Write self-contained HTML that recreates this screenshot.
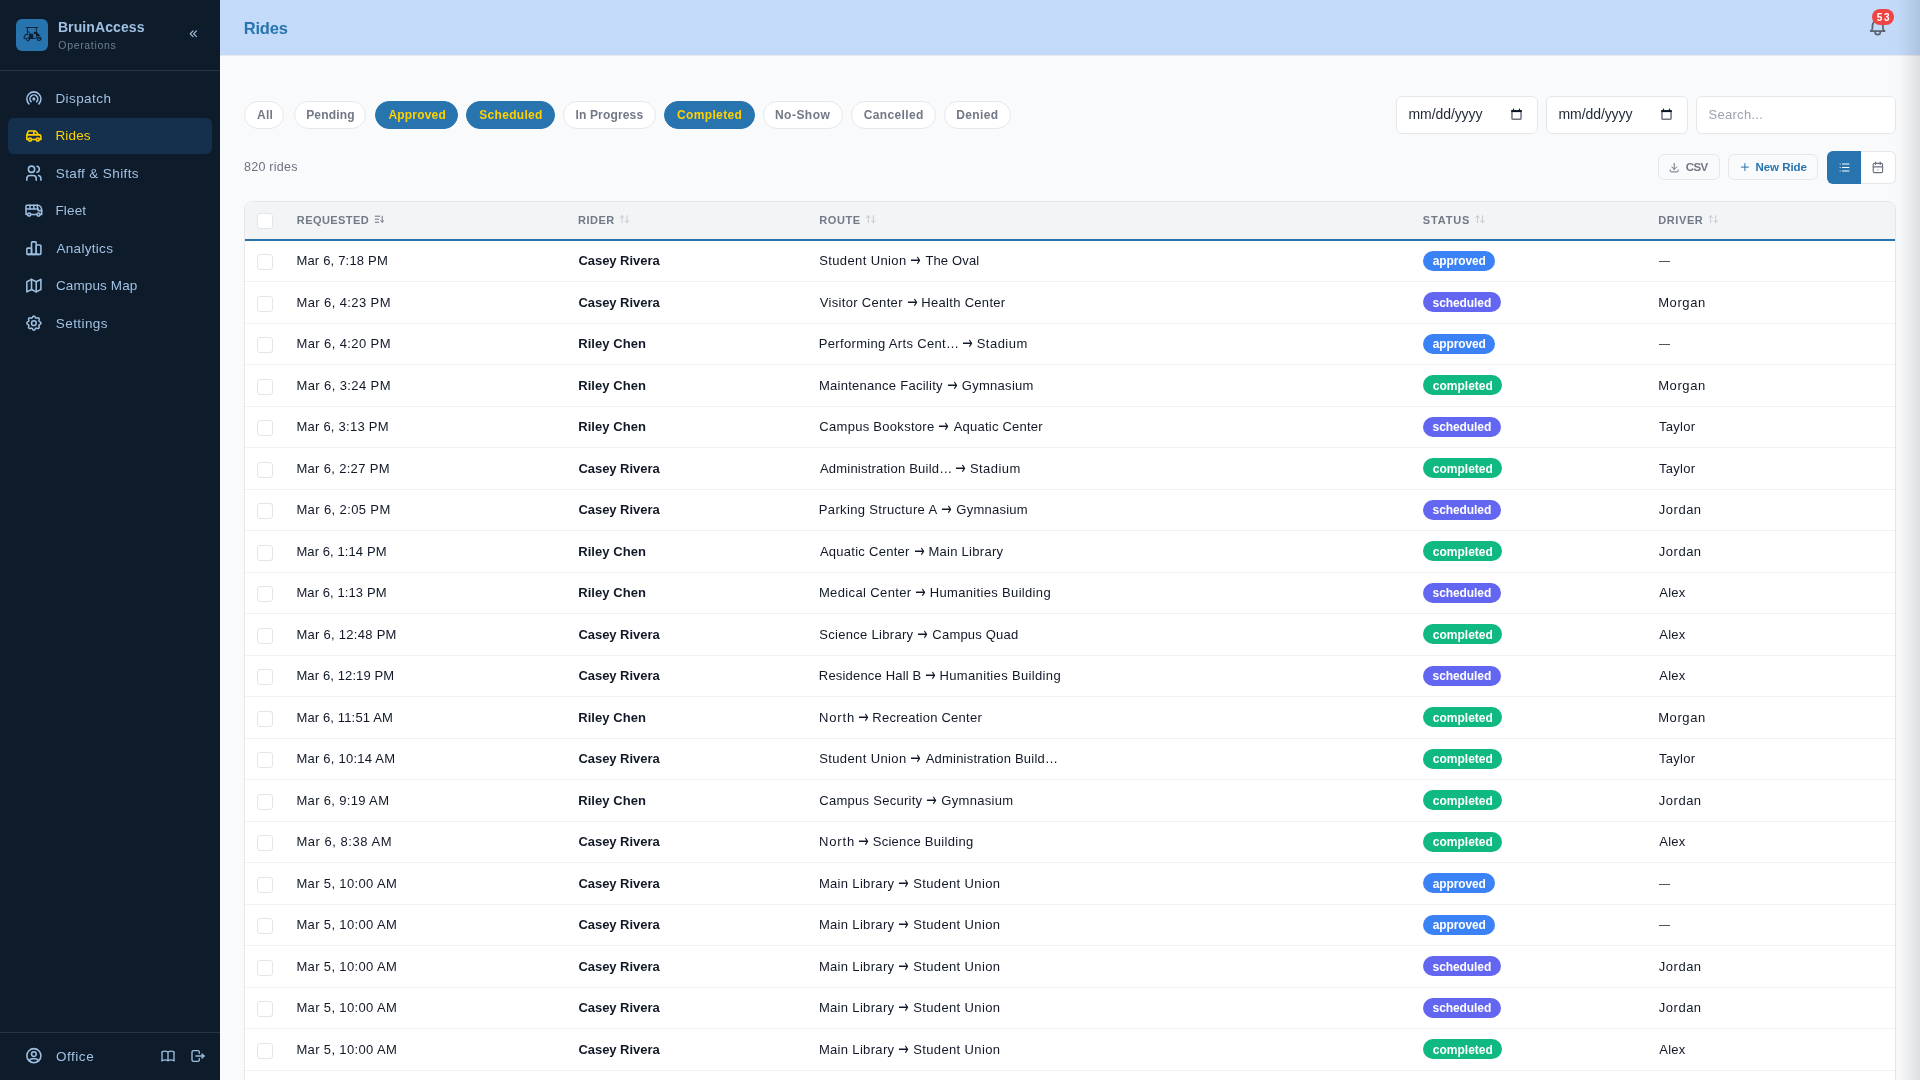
<!DOCTYPE html>
<html lang="en">
<head>
<meta charset="utf-8">
<title>BruinAccess Operations - Rides</title>
<style>
*{box-sizing:border-box;margin:0;padding:0}
html,body{width:1920px;height:1080px;overflow:hidden}
body{font-family:"Liberation Sans",Arial,sans-serif;background:#f9fafb;color:#1f2937;position:relative}
#app{position:absolute;left:0;top:0;width:1920px;height:1080px;will-change:transform}
svg{display:block}
.ic{position:absolute;fill:none;stroke:currentColor;stroke-width:2;stroke-linecap:round;stroke-linejoin:round}
.t{position:absolute;line-height:20px;white-space:pre}
/* sidebar */
#side{position:absolute;left:0;top:0;width:220px;height:1080px;background:#0e1b2b}
#brand{position:absolute;left:0;top:0;width:220px;height:71px;border-bottom:1px solid #2a3546}
#logo{position:absolute;left:16px;top:19px;width:32px;height:32px;border-radius:6px;background:#2774ae;color:#0e1b2b}
#logo svg{position:absolute;left:0;top:0}
.bn{color:#a0c1e2}
.bs{color:#6f7f93}
.nav{position:absolute;left:8px;width:204px;height:36px;border-radius:6px}
.nav.on{background:#15304d}
.nv{color:#9cbfe0}
.nvt{color:#a0c1e2}
.nv.on,.nvt.on{color:#ffd100}
#foot{position:absolute;left:0;top:1032px;width:220px;height:48px;border-top:1px solid #2a3546}
/* header */
#head{position:absolute;left:220px;top:0;width:1700px;height:56px;background:#c3dbf9;border-bottom:1px solid #e7e9ec}
.h1{color:#2774ae}
.bell{color:#5b6472}
#badge{position:absolute;left:1872px;top:9px;width:22px;height:16px;border-radius:8px;background:#ef4444}
.bdg{color:#fff}
/* filters */
.pill{position:absolute;top:101px;height:28px;border:1px solid #e5e7eb;border-radius:14px;background:#fff}
.pill.on{background:#2774ae;border-color:#2774ae}
.pt{color:#717886}
.pt.on{color:#ffd100}
.inp{position:absolute;top:96px;height:37.5px;border:1px solid #e5e7eb;border-radius:6px;background:#fff}
.it{color:#1f2937}
.ph{color:#9ca3af}
.cal{position:absolute;color:#1f2937}
.cnt{color:#6b7280}
.btn{position:absolute;top:154px;height:26px;border:1px solid #e5e7eb;border-radius:6px;background:#f9fafb}
.bt{color:#717886}
.bl{color:#2774ae}
.g5{color:#6b7280}
.g3{color:#c5c9d0}
.wh{color:#fff}
#tog{position:absolute;left:1861px;top:151px;width:34.5px;height:33px;border:1px solid #e5e7eb;border-left:0;border-radius:0 6px 6px 0;background:#fff}
#toga{position:absolute;left:1827px;top:151px;width:34px;height:33px;border-radius:6px 0 0 6px;background:#2774ae}
/* table */
#tbl{position:absolute;left:244px;top:201px;width:1652px;height:900px;border:1px solid #e5e7eb;border-radius:8px 8px 0 0;background:#fff;overflow:hidden}
#th{position:absolute;left:0;top:0;width:1650px;height:39px;background:#f3f4f6;border-bottom:2px solid #2774ae}
.th{color:#727987}
.cb{position:absolute;left:257px;width:16px;height:16px;border:1px solid #e2e5e9;border-radius:3px;background:#fff}
.row{position:absolute;left:245px;width:1650px;height:41.5px;border-bottom:1px solid #f0f1f3}
.c{color:#111827}
.ar{color:#111827;font-family:"DejaVu Sans","Liberation Sans",sans-serif;font-size:13px;line-height:20px;transform:scale(.96,1.4);transform-origin:50% 10.5px}
.bd{position:absolute;left:1423px;height:20px;border-radius:10px}
.bdt{color:#fff}
.ap{background:#3b82f6}
.sc{background:#6366f1}
.co{background:#10b981}
#shade{position:absolute;left:1893px;top:0;width:27px;height:1080px;background:linear-gradient(to right,rgba(0,0,0,0),rgba(0,0,0,.012) 25%,rgba(0,0,0,.035) 45%,rgba(0,0,0,.075) 75%,rgba(0,0,0,.105))}
</style>
</head>
<body>
<div id="app">
<div id="side">
<div id="brand"></div>
<div id="logo"><svg width="32" height="32" viewBox="0 0 32 32" fill="none" stroke="currentColor" stroke-width=".9" stroke-linecap="round" stroke-linejoin="round"><path d="M10.2 8.5h11.6"/><path d="M11.4 8.5v7"/><path d="M20.3 8.8l.3 9.6"/><path d="M12.2 12.3l2.3 3"/><path d="M13.6 15.2h3.2v4.2h-3.2z" fill="currentColor"/><path d="M13.6 19.4h6"/><path d="M11.4 15.5h-2.3v1.9h-1v2.2h2"/><circle cx="11.9" cy="20.4" r="1.5"/><path d="M21.3 20.9v-2.6h3.6v2.6"/><circle cx="23" cy="20.3" r="1.4"/><circle cx="18.8" cy="13.8" r=".7" fill="currentColor"/><path d="M18.8 13.8l1.6 1.6"/><path d="M21 13.7l2.8 3h-3z" fill="currentColor"/></svg></div>
<div class="t bn" style="left:57.91px;top:16.80px;font-size:14px;font-weight:700;letter-spacing:0.093px;">BruinAccess</div>
<div class="t bs" style="left:58.30px;top:34.75px;font-size:10.5px;letter-spacing:0.672px;">Operations</div>
<svg class="ic nv" style="left:186px;top:27px;" width="15" height="15" viewBox="0 0 26.667 26.667"><g transform="translate(1.600 0.000)"><path d="M11 7l-5 5l5 5"/><path d="M17 7l-5 5l5 5"/></g></svg>
<div class="nav" style="top:80.0px"></div><svg class="ic nv" style="left:24px;top:88px;" width="20" height="20" viewBox="0 0 25.600 25.600"><g transform="translate(0.640 0.960)"><path d="M18.364 19.364a9 9 0 1 0 -12.728 0"/><path d="M15.536 16.536a5 5 0 1 0 -7.072 0"/><path d="M12 13m-1 0a1 1 0 1 0 2 0a1 1 0 1 0 -2 0"/></g></svg><div class="t nvt" style="left:55.39px;top:89.00px;font-size:13.5px;letter-spacing:0.429px;">Dispatch</div>
<div class="nav on" style="top:117.5px"></div><svg class="ic nv on" style="left:24px;top:126px;" width="20" height="20" viewBox="0 0 25.600 25.600"><g transform="translate(0.640 0.320)"><path d="M7 17m-2 0a2 2 0 1 0 4 0a2 2 0 1 0 -4 0"/><path d="M17 17m-2 0a2 2 0 1 0 4 0a2 2 0 1 0 -4 0"/><path d="M5 17h-2v-6l2 -5h9l4 5h1a2 2 0 0 1 2 2v4h-2m-4 0h-6m-6 -6h15m-6 0v-5"/></g></svg><div class="t nvt on" style="left:55.39px;top:126.00px;font-size:13.5px;letter-spacing:0.173px;">Rides</div>
<div class="nav" style="top:155.0px"></div><svg class="ic nv" style="left:24px;top:163px;" width="20" height="20" viewBox="0 0 25.600 25.600"><g transform="translate(0.640 0.960)"><path d="M9 7m-4 0a4 4 0 1 0 8 0a4 4 0 1 0 -8 0"/><path d="M3 21v-2a4 4 0 0 1 4 -4h4a4 4 0 0 1 4 4v2"/><path d="M16 3.13a4 4 0 0 1 0 7.75"/><path d="M21 21v-2a4 4 0 0 0 -3 -3.85"/></g></svg><div class="t nvt" style="left:55.77px;top:164.00px;font-size:13.5px;letter-spacing:0.384px;">Staff &amp; Shifts</div>
<div class="nav" style="top:192.5px"></div><svg class="ic nv" style="left:24px;top:201px;" width="20" height="20" viewBox="0 0 25.600 25.600"><g transform="translate(0.640 0.320)"><path d="M6 17m-2 0a2 2 0 1 0 4 0a2 2 0 1 0 -4 0"/><path d="M18 17m-2 0a2 2 0 1 0 4 0a2 2 0 1 0 -4 0"/><path d="M4 17h-2v-11a1 1 0 0 1 1 -1h14a5 7 0 0 1 5 7v5h-2m-4 0h-8"/><path d="M16 5l1.5 7l4.5 0"/><path d="M2 10l15 0"/><path d="M7 5l0 5"/><path d="M12 5l0 5"/></g></svg><div class="t nvt" style="left:55.39px;top:201.00px;font-size:13.5px;letter-spacing:0.182px;">Fleet</div>
<div class="nav" style="top:230.0px"></div><svg class="ic nv" style="left:24px;top:238px;" width="20" height="20" viewBox="0 0 25.600 25.600"><g transform="translate(0.640 0.960)"><path d="M3 13a1 1 0 0 1 1 -1h4a1 1 0 0 1 1 1v6a1 1 0 0 1 -1 1h-4a1 1 0 0 1 -1 -1z"/><path d="M15 9a1 1 0 0 1 1 -1h4a1 1 0 0 1 1 1v10a1 1 0 0 1 -1 1h-4a1 1 0 0 1 -1 -1z"/><path d="M9 5a1 1 0 0 1 1 -1h4a1 1 0 0 1 1 1v14a1 1 0 0 1 -1 1h-4a1 1 0 0 1 -1 -1z"/><path d="M4 20h14"/></g></svg><div class="t nvt" style="left:56.44px;top:239.00px;font-size:13.5px;letter-spacing:0.306px;">Analytics</div>
<div class="nav" style="top:267.5px"></div><svg class="ic nv" style="left:24px;top:276px;" width="20" height="20" viewBox="0 0 25.600 25.600"><g transform="translate(0.640 0.320)"><path d="M3 7l6 -3l6 3l6 -3v13l-6 3l-6 -3l-6 3v-13"/><path d="M9 4v13"/><path d="M15 7v13"/></g></svg><div class="t nvt" style="left:55.93px;top:276.00px;font-size:13.5px;letter-spacing:0.125px;">Campus Map</div>
<div class="nav" style="top:305.0px"></div><svg class="ic nv" style="left:24px;top:313px;" width="20" height="20" viewBox="0 0 25.600 25.600"><g transform="translate(0.640 0.960)"><path d="M10.325 4.317c.426 -1.756 2.924 -1.756 3.35 0a1.724 1.724 0 0 0 2.573 1.066c1.543 -.94 3.31 .826 2.37 2.37a1.724 1.724 0 0 0 1.065 2.572c1.756 .426 1.756 2.924 0 3.35a1.724 1.724 0 0 0 -1.066 2.573c.94 1.543 -.826 3.31 -2.37 2.37a1.724 1.724 0 0 0 -2.572 1.065c-.426 1.756 -2.924 1.756 -3.35 0a1.724 1.724 0 0 0 -2.573 -1.066c-1.543 .94 -3.31 -.826 -2.37 -2.37a1.724 1.724 0 0 0 -1.065 -2.572c-1.756 -.426 -1.756 -2.924 0 -3.35a1.724 1.724 0 0 0 1.066 -2.573c-.94 -1.543 .826 -3.31 2.37 -2.37c1 .608 2.296 .07 2.572 -1.065z"/><path d="M9 12a3 3 0 1 0 6 0a3 3 0 0 0 -6 0"/></g></svg><div class="t nvt" style="left:55.77px;top:314.00px;font-size:13.5px;letter-spacing:0.427px;">Settings</div>
<div id="foot"></div>
<svg class="ic nv" style="left:24px;top:1046px;" width="20" height="20" viewBox="0 0 25.600 25.600"><g transform="translate(0.640 0.384)"><path d="M12 12m-9 0a9 9 0 1 0 18 0a9 9 0 1 0 -18 0"/><path d="M12 10m-3 0a3 3 0 1 0 6 0a3 3 0 1 0 -6 0"/><path d="M6.168 18.849a4 4 0 0 1 3.832 -2.849h4a4 4 0 0 1 3.834 2.855"/></g></svg>
<div class="t nvt" style="left:55.96px;top:1046.60px;font-size:13.5px;letter-spacing:0.537px;">Office</div>
<svg class="ic nv" style="left:160px;top:1048px;" width="17" height="17" viewBox="0 0 25.500 25.500"><path d="M3 19a9 9 0 0 1 9 0a9 9 0 0 1 9 0"/><path d="M3 6a9 9 0 0 1 9 0a9 9 0 0 1 9 0"/><path d="M3 6l0 13"/><path d="M12 6l0 13"/><path d="M21 6l0 13"/></svg>
<svg class="ic nv" style="left:190px;top:1048px;" width="17" height="17" viewBox="0 0 25.500 25.500"><path d="M14 8v-2a2 2 0 0 0 -2 -2h-7a2 2 0 0 0 -2 2v12a2 2 0 0 0 2 2h7a2 2 0 0 0 2 -2v-2"/><path d="M9 12h12l-3 -3"/><path d="M18 15l3 -3"/></svg>
</div>
<div id="head"></div>
<div class="t h1" style="left:243.69px;top:17.90px;font-size:16.5px;font-weight:700;letter-spacing:-0.204px;">Rides</div>
<svg class="ic bell" style="left:1867px;top:16px;" width="22" height="22" viewBox="0 0 25.143 25.143"><g transform="translate(0.229 0.229)"><path d="M10 5a2 2 0 1 1 4 0a7 7 0 0 1 4 6v3a4 4 0 0 0 2 3h-16a4 4 0 0 0 2 -3v-3a7 7 0 0 1 4 -6"/><path d="M9 17v1a3 3 0 0 0 6 0v-1"/></g></svg>
<div id="badge"></div>
<div class="t bdg" style="left:1876.68px;top:8.20px;font-size:10px;font-weight:700;letter-spacing:1.841px;">53</div>
<div class="pill" style="left:244px;width:40px"></div><div class="t pt" style="left:257.01px;top:104.80px;font-size:12px;font-weight:700;letter-spacing:0.309px;">All</div>
<div class="pill" style="left:294px;width:72px"></div><div class="t pt" style="left:306.14px;top:104.80px;font-size:12px;font-weight:700;letter-spacing:0.208px;">Pending</div>
<div class="pill on" style="left:375px;width:83px"></div><div class="t pt on" style="left:388.51px;top:104.80px;font-size:12px;font-weight:700;letter-spacing:0.174px;">Approved</div>
<div class="pill on" style="left:466px;width:89px"></div><div class="t pt on" style="left:479.29px;top:104.80px;font-size:12px;font-weight:700;letter-spacing:0.300px;">Scheduled</div>
<div class="pill" style="left:563px;width:93px"></div><div class="t pt" style="left:575.49px;top:104.80px;font-size:12px;font-weight:700;letter-spacing:0.155px;">In Progress</div>
<div class="pill on" style="left:664px;width:91px"></div><div class="t pt on" style="left:676.97px;top:104.80px;font-size:12px;font-weight:700;letter-spacing:0.364px;">Completed</div>
<div class="pill" style="left:763px;width:80px"></div><div class="t pt" style="left:774.99px;top:104.80px;font-size:12px;font-weight:700;letter-spacing:0.469px;">No-Show</div>
<div class="pill" style="left:851px;width:85px"></div><div class="t pt" style="left:863.72px;top:104.80px;font-size:12px;font-weight:700;letter-spacing:0.372px;">Cancelled</div>
<div class="pill" style="left:944px;width:67px"></div><div class="t pt" style="left:956.24px;top:104.80px;font-size:12px;font-weight:700;letter-spacing:0.377px;">Denied</div>
<div class="inp" style="left:1396px;width:142px"></div><div class="t it" style="left:1408.54px;top:104.00px;font-size:14px;letter-spacing:-0.086px;">mm/dd/yyyy</div><svg style="left:1511px;top:107.8px" class="cal" width="11" height="12.2" viewBox="0 0 11 12.2"><rect x=".95" y="3" width="9.1" height="8.2" rx=".6" fill="none" stroke="#6d7480" stroke-width="1.5"/><path d="M.2 2.1h10.6v2h-10.6z" fill="#0b1424"/><path d="M1.7 2.3l.85-2.2l.85 2.2zM7.6 2.3l.85-2.2l.85 2.2z" fill="#0b1424"/></svg>
<div class="inp" style="left:1546px;width:142px"></div><div class="t it" style="left:1558.54px;top:104.00px;font-size:14px;letter-spacing:-0.086px;">mm/dd/yyyy</div><svg style="left:1661px;top:107.8px" class="cal" width="11" height="12.2" viewBox="0 0 11 12.2"><rect x=".95" y="3" width="9.1" height="8.2" rx=".6" fill="none" stroke="#6d7480" stroke-width="1.5"/><path d="M.2 2.1h10.6v2h-10.6z" fill="#0b1424"/><path d="M1.7 2.3l.85-2.2l.85 2.2zM7.6 2.3l.85-2.2l.85 2.2z" fill="#0b1424"/></svg>
<div class="inp" style="left:1696px;width:200px"></div><div class="t ph" style="left:1708.58px;top:105.00px;font-size:13px;letter-spacing:0.269px;">Search...</div>
<div class="t cnt" style="left:244.05px;top:157.00px;font-size:12.5px;letter-spacing:0.246px;">820 rides</div>
<div class="btn" style="left:1658px;width:62px"></div><svg class="ic g5" style="left:1668px;top:161px;" width="13" height="13" viewBox="0 0 26.000 26.000"><g transform="translate(0.400 0.800)"><path d="M4 17v2a2 2 0 0 0 2 2h12a2 2 0 0 0 2 -2v-2"/><path d="M7 11l5 5l5 -5"/><path d="M12 4l0 12"/></g></svg><div class="t bt" style="left:1685.73px;top:157.25px;font-size:11.5px;font-weight:700;letter-spacing:-0.575px;">CSV</div>
<div class="btn" style="left:1728px;width:90px"></div><svg class="ic bl" style="left:1738px;top:161px;" width="13" height="13" viewBox="0 0 26.000 26.000"><g transform="translate(1.800 0.200)"><path d="M12 5l0 14"/><path d="M5 12l14 0"/></g></svg><div class="t bt bl" style="left:1755.49px;top:157.25px;font-size:11.5px;font-weight:700;letter-spacing:-0.042px;">New Ride</div>
<div id="tog"></div><div id="toga"></div><svg class="ic wh" style="left:1837px;top:160px;" width="15" height="15" viewBox="0 0 25.714 25.714"><g transform="translate(0.343 0.857)"><path d="M9 6l11 0"/><path d="M9 12l11 0"/><path d="M9 18l11 0"/><path d="M5 6l0 .01"/><path d="M5 12l0 .01"/><path d="M5 18l0 .01"/></g></svg><svg class="ic g5" style="left:1870px;top:160px;" width="15" height="15" viewBox="0 0 25.714 25.714"><g transform="translate(1.543 0.686)"><path d="M4 7a2 2 0 0 1 2 -2h12a2 2 0 0 1 2 2v12a2 2 0 0 1 -2 2h-12a2 2 0 0 1 -2 -2z"/><path d="M16 3l0 4"/><path d="M8 3l0 4"/><path d="M4 11l16 0"/><path d="M12 16l0 .01"/></g></svg>
<div id="tbl"><div id="th"></div></div>
<div class="cb" style="top:213px"></div>
<div class="t th" style="left:296.77px;top:210.00px;font-size:11px;font-weight:700;letter-spacing:0.433px;">REQUESTED</div><svg class="ic g5" style="left:373px;top:213px;" width="13" height="13" viewBox="0 0 26.000 26.000"><g transform="translate(0.400 0.400)"><path d="M4 6l9 0"/><path d="M4 12l7 0"/><path d="M4 18l7 0"/><path d="M15 15l3 3l3 -3"/><path d="M18 6l0 12"/></g></svg>
<div class="t th" style="left:577.97px;top:210.00px;font-size:11px;font-weight:700;letter-spacing:0.510px;">RIDER</div><svg class="ic g3" style="left:618px;top:213px;" width="13" height="13" viewBox="0 0 26.000 26.000"><g transform="translate(1.000 0.400)"><path d="M3 9l4 -4l4 4m-4 -4v14"/><path d="M21 15l-4 4l-4 -4m4 4v-14"/></g></svg>
<div class="t th" style="left:819.27px;top:210.00px;font-size:11px;font-weight:700;letter-spacing:0.607px;">ROUTE</div><svg class="ic g3" style="left:864px;top:213px;" width="13" height="13" viewBox="0 0 26.000 26.000"><g transform="translate(1.600 0.400)"><path d="M3 9l4 -4l4 4m-4 -4v14"/><path d="M21 15l-4 4l-4 -4m4 4v-14"/></g></svg>
<div class="t th" style="left:1422.87px;top:210.00px;font-size:11px;font-weight:700;letter-spacing:0.819px;">STATUS</div><svg class="ic g3" style="left:1474px;top:213px;" width="13" height="13" viewBox="0 0 26.000 26.000"><g transform="translate(0.000 0.400)"><path d="M3 9l4 -4l4 4m-4 -4v14"/><path d="M21 15l-4 4l-4 -4m4 4v-14"/></g></svg>
<div class="t th" style="left:1658.27px;top:210.00px;font-size:11px;font-weight:700;letter-spacing:0.594px;">DRIVER</div><svg class="ic g3" style="left:1707px;top:213px;" width="13" height="13" viewBox="0 0 26.000 26.000"><g transform="translate(0.400 0.400)"><path d="M3 9l4 -4l4 4m-4 -4v14"/><path d="M21 15l-4 4l-4 -4m4 4v-14"/></g></svg>
<div class="row" style="top:240.5px"></div><div class="cb" style="top:254px"></div><div class="t c" style="left:296.41px;top:251.00px;font-size:13px;letter-spacing:0.189px;">Mar 6, 7:18 PM</div><div class="t c" style="left:578.42px;top:251.00px;font-size:13px;font-weight:700;letter-spacing:-0.040px;">Casey Rivera</div><div class="t c" style="left:819.18px;top:251.00px;font-size:13px;letter-spacing:0.387px;">Student Union</div><div class="t ar" style="left:910px;top:250.8px">→</div><div class="t c" style="left:925.39px;top:251.00px;font-size:13px;letter-spacing:0.158px;">The Oval</div><div class="bd ap" style="top:251px;width:72px"></div><div class="t bdt" style="left:1432.76px;top:251.00px;font-size:12px;font-weight:700;letter-spacing:-0.126px;">approved</div><div class="t c" style="left:1659.09px;top:250.00px;font-size:11px;">—</div>
<div class="row" style="top:282.0px"></div><div class="cb" style="top:296px"></div><div class="t c" style="left:296.41px;top:293.00px;font-size:13px;letter-spacing:0.401px;">Mar 6, 4:23 PM</div><div class="t c" style="left:578.42px;top:293.00px;font-size:13px;font-weight:700;letter-spacing:-0.040px;">Casey Rivera</div><div class="t c" style="left:819.78px;top:293.00px;font-size:13px;letter-spacing:0.324px;">Visitor Center</div><div class="t ar" style="left:907px;top:292.8px">→</div><div class="t c" style="left:921.32px;top:293.00px;font-size:13px;letter-spacing:0.305px;">Health Center</div><div class="bd sc" style="top:292px;width:78px"></div><div class="t bdt" style="left:1432.57px;top:293.00px;font-size:12px;font-weight:700;letter-spacing:-0.085px;">scheduled</div><div class="t c" style="left:1658.16px;top:293.00px;font-size:13px;letter-spacing:0.603px;">Morgan</div>
<div class="row" style="top:323.5px"></div><div class="cb" style="top:337px"></div><div class="t c" style="left:296.41px;top:334.00px;font-size:13px;letter-spacing:0.401px;">Mar 6, 4:20 PM</div><div class="t c" style="left:578.19px;top:334.00px;font-size:13px;font-weight:700;letter-spacing:0.070px;">Riley Chen</div><div class="t c" style="left:818.82px;top:334.00px;font-size:13px;letter-spacing:0.325px;">Performing Arts Cent…</div><div class="t ar" style="left:962px;top:333.8px">→</div><div class="t c" style="left:976.68px;top:334.00px;font-size:13px;letter-spacing:0.489px;">Stadium</div><div class="bd ap" style="top:334px;width:72px"></div><div class="t bdt" style="left:1432.76px;top:334.00px;font-size:12px;font-weight:700;letter-spacing:-0.126px;">approved</div><div class="t c" style="left:1659.09px;top:333.00px;font-size:11px;">—</div>
<div class="row" style="top:365.0px"></div><div class="cb" style="top:379px"></div><div class="t c" style="left:296.41px;top:376.00px;font-size:13px;letter-spacing:0.401px;">Mar 6, 3:24 PM</div><div class="t c" style="left:578.19px;top:376.00px;font-size:13px;font-weight:700;letter-spacing:0.070px;">Riley Chen</div><div class="t c" style="left:818.91px;top:376.00px;font-size:13px;letter-spacing:0.269px;">Maintenance Facility</div><div class="t ar" style="left:947px;top:375.8px">→</div><div class="t c" style="left:961.86px;top:376.00px;font-size:13px;letter-spacing:0.272px;">Gymnasium</div><div class="bd co" style="top:375px;width:79px"></div><div class="t bdt" style="left:1432.73px;top:376.00px;font-size:12px;font-weight:700;letter-spacing:0.019px;">completed</div><div class="t c" style="left:1658.16px;top:376.00px;font-size:13px;letter-spacing:0.603px;">Morgan</div>
<div class="row" style="top:406.5px"></div><div class="cb" style="top:420px"></div><div class="t c" style="left:296.41px;top:417.00px;font-size:13px;letter-spacing:0.247px;">Mar 6, 3:13 PM</div><div class="t c" style="left:578.19px;top:417.00px;font-size:13px;font-weight:700;letter-spacing:0.070px;">Riley Chen</div><div class="t c" style="left:819.36px;top:417.00px;font-size:13px;letter-spacing:0.284px;">Campus Bookstore</div><div class="t ar" style="left:938px;top:416.8px">→</div><div class="t c" style="left:953.65px;top:417.00px;font-size:13px;letter-spacing:0.229px;">Aquatic Center</div><div class="bd sc" style="top:417px;width:78px"></div><div class="t bdt" style="left:1432.57px;top:417.00px;font-size:12px;font-weight:700;letter-spacing:-0.085px;">scheduled</div><div class="t c" style="left:1658.89px;top:417.00px;font-size:13px;letter-spacing:0.320px;">Taylor</div>
<div class="row" style="top:448.0px"></div><div class="cb" style="top:462px"></div><div class="t c" style="left:296.41px;top:459.00px;font-size:13px;letter-spacing:0.324px;">Mar 6, 2:27 PM</div><div class="t c" style="left:578.42px;top:459.00px;font-size:13px;font-weight:700;letter-spacing:-0.040px;">Casey Rivera</div><div class="t c" style="left:819.90px;top:459.00px;font-size:13px;letter-spacing:0.222px;">Administration Build…</div><div class="t ar" style="left:955px;top:458.8px">→</div><div class="t c" style="left:969.93px;top:459.00px;font-size:13px;letter-spacing:0.448px;">Stadium</div><div class="bd co" style="top:458px;width:79px"></div><div class="t bdt" style="left:1432.73px;top:459.00px;font-size:12px;font-weight:700;letter-spacing:0.019px;">completed</div><div class="t c" style="left:1658.89px;top:459.00px;font-size:13px;letter-spacing:0.320px;">Taylor</div>
<div class="row" style="top:489.5px"></div><div class="cb" style="top:503px"></div><div class="t c" style="left:296.41px;top:500.00px;font-size:13px;letter-spacing:0.381px;">Mar 6, 2:05 PM</div><div class="t c" style="left:578.42px;top:500.00px;font-size:13px;font-weight:700;letter-spacing:-0.040px;">Casey Rivera</div><div class="t c" style="left:818.82px;top:500.00px;font-size:13px;letter-spacing:0.347px;">Parking Structure A</div><div class="t ar" style="left:941px;top:499.8px">→</div><div class="t c" style="left:956.36px;top:500.00px;font-size:13px;letter-spacing:0.241px;">Gymnasium</div><div class="bd sc" style="top:500px;width:78px"></div><div class="t bdt" style="left:1432.57px;top:500.00px;font-size:12px;font-weight:700;letter-spacing:-0.085px;">scheduled</div><div class="t c" style="left:1658.85px;top:500.00px;font-size:13px;letter-spacing:0.501px;">Jordan</div>
<div class="row" style="top:531.0px"></div><div class="cb" style="top:545px"></div><div class="t c" style="left:296.41px;top:542.00px;font-size:13px;letter-spacing:0.093px;">Mar 6, 1:14 PM</div><div class="t c" style="left:578.19px;top:542.00px;font-size:13px;font-weight:700;letter-spacing:0.070px;">Riley Chen</div><div class="t c" style="left:819.90px;top:542.00px;font-size:13px;letter-spacing:0.268px;">Aquatic Center</div><div class="t ar" style="left:914px;top:541.8px">→</div><div class="t c" style="left:928.41px;top:542.00px;font-size:13px;letter-spacing:0.282px;">Main Library</div><div class="bd co" style="top:541px;width:79px"></div><div class="t bdt" style="left:1432.73px;top:542.00px;font-size:12px;font-weight:700;letter-spacing:0.019px;">completed</div><div class="t c" style="left:1658.85px;top:542.00px;font-size:13px;letter-spacing:0.501px;">Jordan</div>
<div class="row" style="top:572.5px"></div><div class="cb" style="top:586px"></div><div class="t c" style="left:296.41px;top:583.00px;font-size:13px;letter-spacing:0.093px;">Mar 6, 1:13 PM</div><div class="t c" style="left:578.19px;top:583.00px;font-size:13px;font-weight:700;letter-spacing:0.070px;">Riley Chen</div><div class="t c" style="left:818.91px;top:583.00px;font-size:13px;letter-spacing:0.370px;">Medical Center</div><div class="t ar" style="left:915px;top:582.8px">→</div><div class="t c" style="left:929.82px;top:583.00px;font-size:13px;letter-spacing:0.329px;">Humanities Building</div><div class="bd sc" style="top:583px;width:78px"></div><div class="t bdt" style="left:1432.57px;top:583.00px;font-size:12px;font-weight:700;letter-spacing:-0.085px;">scheduled</div><div class="t c" style="left:1659.15px;top:583.00px;font-size:13px;letter-spacing:0.315px;">Alex</div>
<div class="row" style="top:614.0px"></div><div class="cb" style="top:628px"></div><div class="t c" style="left:296.41px;top:625.00px;font-size:13px;letter-spacing:0.279px;">Mar 6, 12:48 PM</div><div class="t c" style="left:578.42px;top:625.00px;font-size:13px;font-weight:700;letter-spacing:-0.040px;">Casey Rivera</div><div class="t c" style="left:819.18px;top:625.00px;font-size:13px;letter-spacing:0.310px;">Science Library</div><div class="t ar" style="left:917px;top:624.8px">→</div><div class="t c" style="left:932.36px;top:625.00px;font-size:13px;letter-spacing:0.201px;">Campus Quad</div><div class="bd co" style="top:624px;width:79px"></div><div class="t bdt" style="left:1432.73px;top:625.00px;font-size:12px;font-weight:700;letter-spacing:0.019px;">completed</div><div class="t c" style="left:1659.15px;top:625.00px;font-size:13px;letter-spacing:0.315px;">Alex</div>
<div class="row" style="top:655.5px"></div><div class="cb" style="top:669px"></div><div class="t c" style="left:296.41px;top:666.00px;font-size:13px;letter-spacing:0.118px;">Mar 6, 12:19 PM</div><div class="t c" style="left:578.42px;top:666.00px;font-size:13px;font-weight:700;letter-spacing:-0.040px;">Casey Rivera</div><div class="t c" style="left:818.82px;top:666.00px;font-size:13px;letter-spacing:0.184px;">Residence Hall B</div><div class="t ar" style="left:925px;top:665.8px">→</div><div class="t c" style="left:939.57px;top:666.00px;font-size:13px;letter-spacing:0.343px;">Humanities Building</div><div class="bd sc" style="top:666px;width:78px"></div><div class="t bdt" style="left:1432.57px;top:666.00px;font-size:12px;font-weight:700;letter-spacing:-0.085px;">scheduled</div><div class="t c" style="left:1659.15px;top:666.00px;font-size:13px;letter-spacing:0.315px;">Alex</div>
<div class="row" style="top:697.0px"></div><div class="cb" style="top:711px"></div><div class="t c" style="left:296.41px;top:708.00px;font-size:13px;letter-spacing:0.141px;">Mar 6, 11:51 AM</div><div class="t c" style="left:578.19px;top:708.00px;font-size:13px;font-weight:700;letter-spacing:0.070px;">Riley Chen</div><div class="t c" style="left:818.90px;top:708.00px;font-size:13px;letter-spacing:0.864px;">North</div><div class="t ar" style="left:858px;top:707.8px">→</div><div class="t c" style="left:872.32px;top:708.00px;font-size:13px;letter-spacing:0.245px;">Recreation Center</div><div class="bd co" style="top:707px;width:79px"></div><div class="t bdt" style="left:1432.73px;top:708.00px;font-size:12px;font-weight:700;letter-spacing:0.019px;">completed</div><div class="t c" style="left:1658.16px;top:708.00px;font-size:13px;letter-spacing:0.603px;">Morgan</div>
<div class="row" style="top:738.5px"></div><div class="cb" style="top:752px"></div><div class="t c" style="left:296.41px;top:749.00px;font-size:13px;letter-spacing:0.230px;">Mar 6, 10:14 AM</div><div class="t c" style="left:578.42px;top:749.00px;font-size:13px;font-weight:700;letter-spacing:-0.040px;">Casey Rivera</div><div class="t c" style="left:819.18px;top:749.00px;font-size:13px;letter-spacing:0.387px;">Student Union</div><div class="t ar" style="left:910px;top:748.8px">→</div><div class="t c" style="left:925.65px;top:749.00px;font-size:13px;letter-spacing:0.222px;">Administration Build…</div><div class="bd co" style="top:749px;width:79px"></div><div class="t bdt" style="left:1432.73px;top:749.00px;font-size:12px;font-weight:700;letter-spacing:0.019px;">completed</div><div class="t c" style="left:1658.89px;top:749.00px;font-size:13px;letter-spacing:0.320px;">Taylor</div>
<div class="row" style="top:780.0px"></div><div class="cb" style="top:794px"></div><div class="t c" style="left:296.41px;top:791.00px;font-size:13px;letter-spacing:0.339px;">Mar 6, 9:19 AM</div><div class="t c" style="left:578.19px;top:791.00px;font-size:13px;font-weight:700;letter-spacing:0.070px;">Riley Chen</div><div class="t c" style="left:819.36px;top:791.00px;font-size:13px;letter-spacing:0.263px;">Campus Security</div><div class="t ar" style="left:926px;top:790.8px">→</div><div class="t c" style="left:941.36px;top:791.00px;font-size:13px;letter-spacing:0.303px;">Gymnasium</div><div class="bd co" style="top:790px;width:79px"></div><div class="t bdt" style="left:1432.73px;top:791.00px;font-size:12px;font-weight:700;letter-spacing:0.019px;">completed</div><div class="t c" style="left:1658.85px;top:791.00px;font-size:13px;letter-spacing:0.501px;">Jordan</div>
<div class="row" style="top:821.5px"></div><div class="cb" style="top:835px"></div><div class="t c" style="left:296.41px;top:832.00px;font-size:13px;letter-spacing:0.531px;">Mar 6, 8:38 AM</div><div class="t c" style="left:578.42px;top:832.00px;font-size:13px;font-weight:700;letter-spacing:-0.040px;">Casey Rivera</div><div class="t c" style="left:818.90px;top:832.00px;font-size:13px;letter-spacing:0.864px;">North</div><div class="t ar" style="left:858px;top:831.8px">→</div><div class="t c" style="left:872.68px;top:832.00px;font-size:13px;letter-spacing:0.291px;">Science Building</div><div class="bd co" style="top:832px;width:79px"></div><div class="t bdt" style="left:1432.73px;top:832.00px;font-size:12px;font-weight:700;letter-spacing:0.019px;">completed</div><div class="t c" style="left:1659.15px;top:832.00px;font-size:13px;letter-spacing:0.315px;">Alex</div>
<div class="row" style="top:863.0px"></div><div class="cb" style="top:877px"></div><div class="t c" style="left:296.41px;top:874.00px;font-size:13px;letter-spacing:0.355px;">Mar 5, 10:00 AM</div><div class="t c" style="left:578.42px;top:874.00px;font-size:13px;font-weight:700;letter-spacing:-0.040px;">Casey Rivera</div><div class="t c" style="left:818.91px;top:874.00px;font-size:13px;letter-spacing:0.328px;">Main Library</div><div class="t ar" style="left:898px;top:873.8px">→</div><div class="t c" style="left:913.18px;top:874.00px;font-size:13px;letter-spacing:0.366px;">Student Union</div><div class="bd ap" style="top:873px;width:72px"></div><div class="t bdt" style="left:1432.76px;top:874.00px;font-size:12px;font-weight:700;letter-spacing:-0.126px;">approved</div><div class="t c" style="left:1659.09px;top:873.00px;font-size:11px;">—</div>
<div class="row" style="top:904.5px"></div><div class="cb" style="top:918px"></div><div class="t c" style="left:296.41px;top:915.00px;font-size:13px;letter-spacing:0.355px;">Mar 5, 10:00 AM</div><div class="t c" style="left:578.42px;top:915.00px;font-size:13px;font-weight:700;letter-spacing:-0.040px;">Casey Rivera</div><div class="t c" style="left:818.91px;top:915.00px;font-size:13px;letter-spacing:0.328px;">Main Library</div><div class="t ar" style="left:898px;top:914.8px">→</div><div class="t c" style="left:913.18px;top:915.00px;font-size:13px;letter-spacing:0.366px;">Student Union</div><div class="bd ap" style="top:915px;width:72px"></div><div class="t bdt" style="left:1432.76px;top:915.00px;font-size:12px;font-weight:700;letter-spacing:-0.126px;">approved</div><div class="t c" style="left:1659.09px;top:914.00px;font-size:11px;">—</div>
<div class="row" style="top:946.0px"></div><div class="cb" style="top:960px"></div><div class="t c" style="left:296.41px;top:957.00px;font-size:13px;letter-spacing:0.355px;">Mar 5, 10:00 AM</div><div class="t c" style="left:578.42px;top:957.00px;font-size:13px;font-weight:700;letter-spacing:-0.040px;">Casey Rivera</div><div class="t c" style="left:818.91px;top:957.00px;font-size:13px;letter-spacing:0.328px;">Main Library</div><div class="t ar" style="left:898px;top:956.8px">→</div><div class="t c" style="left:913.18px;top:957.00px;font-size:13px;letter-spacing:0.366px;">Student Union</div><div class="bd sc" style="top:956px;width:78px"></div><div class="t bdt" style="left:1432.57px;top:957.00px;font-size:12px;font-weight:700;letter-spacing:-0.085px;">scheduled</div><div class="t c" style="left:1658.85px;top:957.00px;font-size:13px;letter-spacing:0.501px;">Jordan</div>
<div class="row" style="top:987.5px"></div><div class="cb" style="top:1001px"></div><div class="t c" style="left:296.41px;top:998.00px;font-size:13px;letter-spacing:0.355px;">Mar 5, 10:00 AM</div><div class="t c" style="left:578.42px;top:998.00px;font-size:13px;font-weight:700;letter-spacing:-0.040px;">Casey Rivera</div><div class="t c" style="left:818.91px;top:998.00px;font-size:13px;letter-spacing:0.328px;">Main Library</div><div class="t ar" style="left:898px;top:997.8px">→</div><div class="t c" style="left:913.18px;top:998.00px;font-size:13px;letter-spacing:0.366px;">Student Union</div><div class="bd sc" style="top:998px;width:78px"></div><div class="t bdt" style="left:1432.57px;top:998.00px;font-size:12px;font-weight:700;letter-spacing:-0.085px;">scheduled</div><div class="t c" style="left:1658.85px;top:998.00px;font-size:13px;letter-spacing:0.501px;">Jordan</div>
<div class="row" style="top:1029.0px"></div><div class="cb" style="top:1043px"></div><div class="t c" style="left:296.41px;top:1040.00px;font-size:13px;letter-spacing:0.355px;">Mar 5, 10:00 AM</div><div class="t c" style="left:578.42px;top:1040.00px;font-size:13px;font-weight:700;letter-spacing:-0.040px;">Casey Rivera</div><div class="t c" style="left:818.91px;top:1040.00px;font-size:13px;letter-spacing:0.328px;">Main Library</div><div class="t ar" style="left:898px;top:1039.8px">→</div><div class="t c" style="left:913.18px;top:1040.00px;font-size:13px;letter-spacing:0.366px;">Student Union</div><div class="bd co" style="top:1039px;width:79px"></div><div class="t bdt" style="left:1432.73px;top:1040.00px;font-size:12px;font-weight:700;letter-spacing:0.019px;">completed</div><div class="t c" style="left:1659.15px;top:1040.00px;font-size:13px;letter-spacing:0.315px;">Alex</div>
<div class="row" style="top:1070.5px"></div><div class="cb" style="top:1084px"></div><div class="t c" style="left:296.41px;top:1081.00px;font-size:13px;letter-spacing:0.355px;">Mar 5, 10:00 AM</div><div class="t c" style="left:578.42px;top:1081.00px;font-size:13px;font-weight:700;letter-spacing:-0.040px;">Casey Rivera</div><div class="t c" style="left:818.91px;top:1081.00px;font-size:13px;letter-spacing:0.328px;">Main Library</div><div class="t ar" style="left:898px;top:1080.8px">→</div><div class="t c" style="left:913.18px;top:1081.00px;font-size:13px;letter-spacing:0.366px;">Student Union</div><div class="bd co" style="top:1081px;width:79px"></div><div class="t bdt" style="left:1432.73px;top:1081.00px;font-size:12px;font-weight:700;letter-spacing:0.019px;">completed</div><div class="t c" style="left:1659.15px;top:1081.00px;font-size:13px;letter-spacing:0.315px;">Alex</div>
<div id="shade"></div>
</div>
</body>
</html>
